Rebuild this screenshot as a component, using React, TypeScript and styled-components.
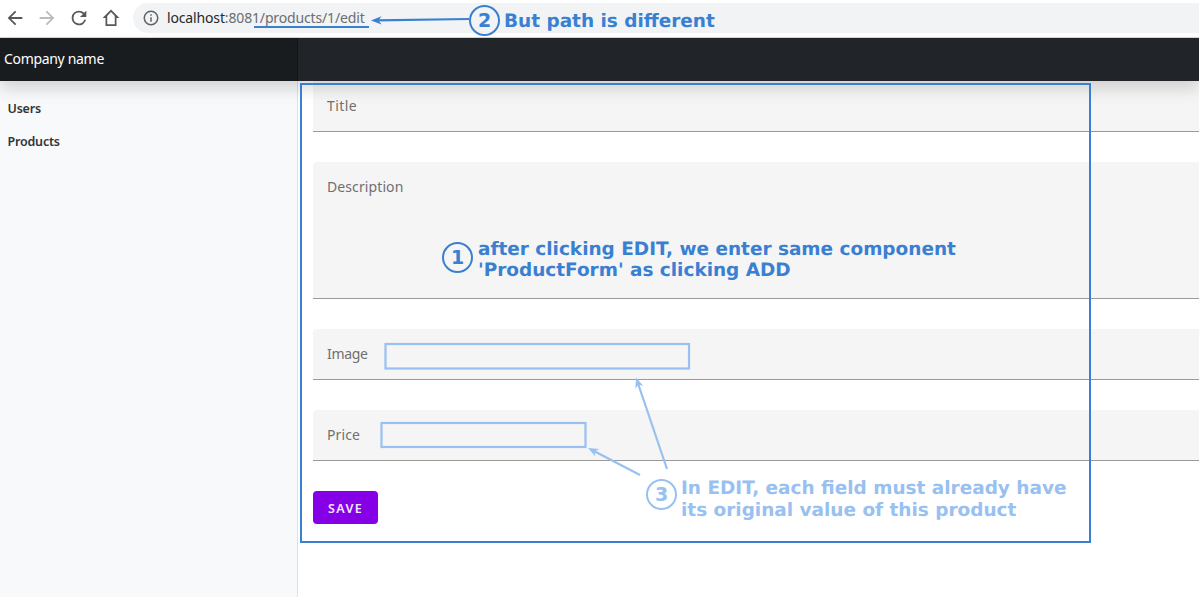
import React from 'react';
import styled, { createGlobalStyle } from 'styled-components';

const BLUE = '#3a80d2';
const LIGHT = '#98c0f0';

const GlobalStyle = createGlobalStyle`
  * { box-sizing: border-box; }
  body {
    margin: 0;
    background: #fff;
    font-family: 'Noto Sans', 'Open Sans', sans-serif;
    overflow: hidden;
  }
`;

const Page = styled.div`
  position: relative;
  display: flex;
  flex-direction: column;
  width: 1199px;
  height: 597px;
  overflow: hidden;
`;

const BrowserBar = styled.div`
  display: flex;
  align-items: center;
  flex: none;
  height: 38px;
  padding: 0 0 1px 4px;
  border-bottom: 1px solid #d5d7d9;
  background: #fff;
`;

const NavIcon = styled.svg<{ $muted?: boolean }>`
  flex: none;
  width: 22px;
  height: 22px;
  margin-right: 10px;
  fill: ${(p) => (p.$muted ? '#b9bbbd' : '#55585c')};
`;

const AddressPill = styled.div`
  display: flex;
  align-items: center;
  flex: 1;
  height: 30px;
  margin-left: 1px;
  padding-left: 9px;
  border-radius: 15px 0 0 15px;
  background: #f1f3f4;
`;

const InfoIcon = styled.svg`
  width: 18px;
  height: 18px;
  margin-right: 7px;
  fill: #5f6368;
`;

const Url = styled.span`
  font-size: 14px;
  line-height: 20px;
  letter-spacing: -0.15px;
  color: #6b6e72;
  white-space: nowrap;
`;

const Host = styled.span`
  color: #26282b;
`;

const Header = styled.header`
  position: relative;
  z-index: 1;
  display: flex;
  flex: none;
  height: 43px;
  background: #212529;
  box-shadow: 0 8px 16px rgba(0, 0, 0, 0.15);
`;

const Brand = styled.div`
  width: 298px;
  padding: 10px 4px;
  background: #191c1f;
  box-shadow: inset -1px 0 0 rgba(0, 0, 0, 0.25);
  color: #fff;
  font-size: 14px;
  line-height: 22px;
  letter-spacing: -0.32px;
`;

const Body = styled.div`
  display: flex;
  flex: 1;
  min-height: 0;
`;

const Sidebar = styled.nav`
  display: flex;
  flex-direction: column;
  gap: 13px;
  flex: none;
  width: 298px;
  padding: 18px 7.5px;
  border-right: 1px solid #dfe2e5;
  background: #f8f9fb;
`;

const SideLink = styled.a`
  font-size: 12.5px;
  line-height: 20px;
  font-weight: 600;
  letter-spacing: -0.2px;
  color: #333;
`;

const Form = styled.main`
  display: flex;
  flex-direction: column;
  flex: 1;
  align-items: stretch;
  gap: 30px;
  padding-left: 15px;
`;

const Field = styled.div<{ $height?: number; $flat?: boolean }>`
  flex: none;
  height: ${(p) => p.$height ?? 51}px;
  padding: 14px;
  border-bottom: 1px solid #9a9a9a;
  border-radius: ${(p) => (p.$flat ? '0' : '4px 0 0 0')};
  background: #f5f5f5;
`;

const Label = styled.label<{ $spacing: number }>`
  display: block;
  font-size: 14px;
  line-height: 22px;
  letter-spacing: ${(p) => p.$spacing}px;
  color: #707070;
`;

const SaveButton = styled.button`
  flex: none;
  align-self: flex-start;
  width: 65px;
  height: 33px;
  padding: 2px 0 0 0;
  border: 0;
  border-radius: 4px;
  background: #8500e6;
  color: #f6e9ff;
  font: 600 12.5px 'Noto Sans', sans-serif;
  letter-spacing: 1.3px;
`;

const Markup = styled.svg`
  position: absolute;
  inset: 0;
  z-index: 2;
  width: 1199px;
  height: 597px;
  fill: none;
  stroke-width: 2.2;
`;

const Note = styled.div<{ $x: number; $y: number; $color: string; $line?: number }>`
  position: absolute;
  z-index: 3;
  left: ${(p) => p.$x}px;
  top: ${(p) => p.$y}px;
  color: ${(p) => p.$color};
  font: bold 18.47px/${(p) => p.$line ?? 22}px 'DejaVu Sans', sans-serif;
  text-rendering: geometricPrecision;
  white-space: pre;
`;

const Step = styled.div<{ $x: number; $y: number; $color: string }>`
  position: absolute;
  z-index: 3;
  left: ${(p) => p.$x}px;
  top: ${(p) => p.$y}px;
  width: 31px;
  height: 31px;
  border: 2px solid ${(p) => p.$color};
  border-radius: 50%;
  color: ${(p) => p.$color};
  font: bold 19px/27px 'DejaVu Sans', sans-serif;
  text-align: center;
`;

interface ArrowProps {
  from: [number, number];
  to: [number, number];
  color: string;
}

function Arrow({ from, to, color }: ArrowProps) {
  const angle = (Math.atan2(to[1] - from[1], to[0] - from[0]) * 180) / Math.PI;
  const length = Math.hypot(to[0] - from[0], to[1] - from[1]);
  return (
    <g transform={`translate(${to[0]} ${to[1]}) rotate(${angle})`}>
      <path d={`M${-length} 0H-5`} stroke={color} />
      <path d="M0 0L-10.5 4.2L-7.5 0L-10.5 -4.2Z" fill={color} />
    </g>
  );
}

export default function App() {
  return (
    <Page>
      <GlobalStyle />
      <BrowserBar>
        <NavIcon viewBox="0 0 24 24">
          <path d="M20 11H7.83l5.59-5.59L12 4l-8 8 8 8 1.41-1.41L7.83 13H20v-2z" />
        </NavIcon>
        <NavIcon viewBox="0 0 24 24" $muted>
          <path d="M12 4l-1.41 1.41L16.17 11H4v2h12.17l-5.58 5.59L12 20l8-8z" />
        </NavIcon>
        <NavIcon viewBox="0 0 24 24">
          <path d="M17.65 6.35A7.96 7.96 0 0 0 12 4a8 8 0 1 0 7.73 10h-2.08A6 6 0 1 1 12 6c1.66 0 3.14.69 4.22 1.78L13 11h7V4l-2.35 2.35z" />
        </NavIcon>
        <NavIcon viewBox="0 0 24 24">
          <path fillRule="evenodd" d="M12 2.6L2.8 12H6v8.8h12V12h3.2L12 2.6zM12 5.5l4.1 4.2v9.2H7.9V9.7z" />
        </NavIcon>
        <AddressPill>
          <InfoIcon viewBox="0 0 24 24">
            <path d="M11 7h2v2h-2zm0 4h2v6h-2zm1-9a10 10 0 1 0 0 20 10 10 0 0 0 0-20zm0 18a8 8 0 1 1 0-16 8 8 0 0 1 0 16z" />
          </InfoIcon>
          <Url>
            <Host>localhost</Host>:8081/products/1/edit
          </Url>
        </AddressPill>
      </BrowserBar>
      <Header>
        <Brand>Company name</Brand>
      </Header>
      <Body>
        <Sidebar>
          <SideLink>Users</SideLink>
          <SideLink>Products</SideLink>
        </Sidebar>
        <Form>
          <Field $flat>
            <Label $spacing={0.4}>Title</Label>
          </Field>
          <Field $height={137}>
            <Label $spacing={0.1}>Description</Label>
          </Field>
          <Field>
            <Label $spacing={-0.35}>Image</Label>
          </Field>
          <Field>
            <Label $spacing={0.1}>Price</Label>
          </Field>
          <SaveButton>SAVE</SaveButton>
        </Form>
      </Body>

      <Markup viewBox="0 0 1199 597">
        <rect x="301" y="84" width="789" height="458" stroke={BLUE} strokeWidth="2" />
        <path d="M254 27H369" stroke={BLUE} strokeWidth="2" />
        <rect x="385.5" y="344" width="303.5" height="24.5" stroke={LIGHT} />
        <rect x="381.5" y="423" width="204" height="24" stroke={LIGHT} />
        <Arrow from={[469, 19]} to={[371, 20.5]} color={BLUE} />
        <Arrow from={[667, 469]} to={[636, 377.5]} color={LIGHT} />
        <Arrow from={[640, 475]} to={[588, 448]} color={LIGHT} />
      </Markup>
      <Step $x={469} $y={5} $color={BLUE}>2</Step>
      <Note $x={504} $y={11} $color={BLUE}>But path is different</Note>
      <Step $x={442} $y={242} $color={BLUE}>1</Step>
      <Note $x={478} $y={239} $color={BLUE} $line={21}>{"after clicking EDIT, we enter same component\n'ProductForm' as clicking ADD"}</Note>
      <Step $x={646} $y={479} $color={LIGHT}>3</Step>
      <Note $x={681} $y={478} $color={LIGHT}>{'In EDIT, each field must already have\nits original value of this product'}</Note>
    </Page>
  );
}
